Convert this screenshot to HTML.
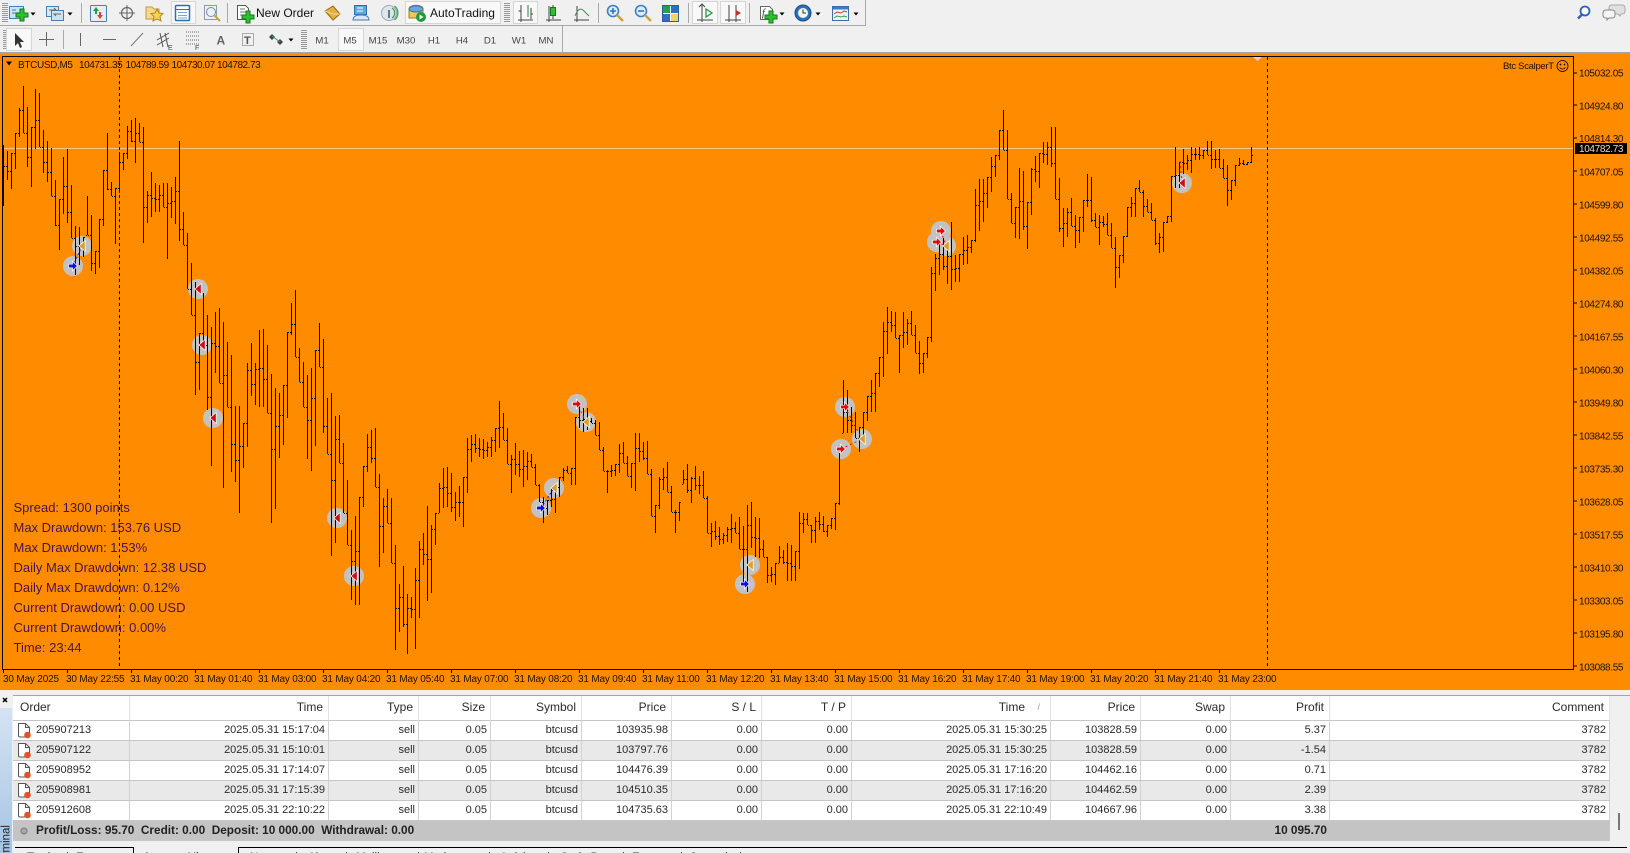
<!DOCTYPE html>
<html><head><meta charset="utf-8"><title>BTCUSD,M5</title>
<style>
html,body{margin:0;padding:0;width:1630px;height:853px;overflow:hidden;background:#f0f0f0;font-family:"Liberation Sans",sans-serif}
#s{position:absolute;left:0;top:0}
table{position:absolute;left:13px;top:696px;width:1597px;border-collapse:separate;border-spacing:0;table-layout:fixed;font-size:11px;color:#2a2a2a;background:#fff}
td,th{padding:0 3px 1px 0;text-align:right;white-space:nowrap;overflow:hidden;font-weight:normal;height:18px;line-height:18px;border-right:1px solid #d2d2d2;border-bottom:1px solid #c6c6c6;box-sizing:content-box}
th{height:23px;line-height:23px;padding-right:5px;font-size:12px;border-right:1px solid #e2e2e2;position:relative}
th:first-child{text-align:left;padding-left:7px}
th span{position:absolute;right:10px;top:0;color:#999;font-size:9px}
td:first-child{text-align:left;padding-left:23px;position:relative;overflow:visible}
td:first-child svg{position:absolute;left:4px;top:1px}
tr.a td{background:#e9e9e9}
tr.t td{background:#c4c4c4;border:0;height:18px;line-height:18px;padding-bottom:2px;font-weight:bold;font-size:11.8px;color:#222;overflow:visible}
</style></head><body>
<table>
<colgroup><col style="width:117px"><col style="width:199px"><col style="width:90px"><col style="width:72px"><col style="width:91px"><col style="width:90px"><col style="width:90px"><col style="width:90px"><col style="width:199px"><col style="width:90px"><col style="width:90px"><col style="width:99px"><col></colgroup>
<tr><th>Order</th><th>Time</th><th>Type</th><th>Size</th><th>Symbol</th><th>Price</th><th>S / L</th><th>T / P</th><th style="padding-right:25px">Time<span>/</span></th><th>Price</th><th>Swap</th><th>Profit</th><th>Comment</th></tr>
<tr><td><svg width="16" height="18"><use href="#doc"/></svg>205907213</td><td>2025.05.31 15:17:04</td><td>sell</td><td>0.05</td><td>btcusd</td><td>103935.98</td><td>0.00</td><td>0.00</td><td>2025.05.31 15:30:25</td><td>103828.59</td><td>0.00</td><td>5.37</td><td>3782</td></tr>
<tr class="a"><td><svg width="16" height="18"><use href="#doc"/></svg>205907122</td><td>2025.05.31 15:10:01</td><td>sell</td><td>0.05</td><td>btcusd</td><td>103797.76</td><td>0.00</td><td>0.00</td><td>2025.05.31 15:30:25</td><td>103828.59</td><td>0.00</td><td>-1.54</td><td>3782</td></tr>
<tr><td><svg width="16" height="18"><use href="#doc"/></svg>205908952</td><td>2025.05.31 17:14:07</td><td>sell</td><td>0.05</td><td>btcusd</td><td>104476.39</td><td>0.00</td><td>0.00</td><td>2025.05.31 17:16:20</td><td>104462.16</td><td>0.00</td><td>0.71</td><td>3782</td></tr>
<tr class="a"><td><svg width="16" height="18"><use href="#doc"/></svg>205908981</td><td>2025.05.31 17:15:39</td><td>sell</td><td>0.05</td><td>btcusd</td><td>104510.35</td><td>0.00</td><td>0.00</td><td>2025.05.31 17:16:20</td><td>104462.59</td><td>0.00</td><td>2.39</td><td>3782</td></tr>
<tr><td><svg width="16" height="18"><use href="#doc"/></svg>205912608</td><td>2025.05.31 22:10:22</td><td>sell</td><td>0.05</td><td>btcusd</td><td>104735.63</td><td>0.00</td><td>0.00</td><td>2025.05.31 22:10:49</td><td>104667.96</td><td>0.00</td><td>3.38</td><td>3782</td></tr>
<tr class="t"><td colspan="11" style="text-align:left;word-spacing:0"><svg width="12" height="18" style="left:5px;top:1px"><circle cx="6" cy="9" r="3" fill="#aaa" stroke="#777"/></svg>Profit/Loss: 95.70&nbsp; Credit: 0.00&nbsp; Deposit: 10 000.00&nbsp; Withdrawal: 0.00</td><td>10 095.70</td><td></td></tr>
</table>

<svg id="s" width="1630" height="853" viewBox="0 0 1630 853" xmlns="http://www.w3.org/2000/svg" style="pointer-events:none">
<defs>
<linearGradient id="lb" x1="0" y1="0" x2="0" y2="1"><stop offset="0" stop-color="#d4e3f2"/><stop offset="1" stop-color="#a6c4e4"/></linearGradient>
<g id="doc"><path d="M1.500 1.500h7l4 4v8c0 1-.5 1.500-1.500 1.500h-8c-1 0-1.500-.5-1.500-1.500z" fill="#fff" stroke="#555"/><path d="M8.500 1.500v4h4" fill="none" stroke="#555"/><circle cx="10.500" cy="13" r="3.300" fill="#e2522a"/></g>
<path id="plus" d="M-2-6h4v4h4v4h-4v4h-4v-4h-4v-4h4z" fill="#2ec02e" stroke="#0f7d1f" stroke-width="1"/>
<path id="ra" d="M-4.500-1.800h4v-3l5 4.800-5 4.800v-3h-4z" stroke="#fff" stroke-width=".7"/>
<path id="lt" d="M3.200-5.500L-3.200 0 3.200 5.500z" stroke="#fff" stroke-width=".7"/>
<path id="dd" d="M-2.500-1.500h5l-2.500 3z" fill="#000"/>
<g id="grip" fill="#999"><rect x="0" y="0" width="6" height="1"/><rect x="0" y="2" width="6" height="1"/><rect x="0" y="4" width="6" height="1"/><rect x="0" y="6" width="6" height="1"/><rect x="0" y="8" width="6" height="1"/><rect x="0" y="10" width="6" height="1"/><rect x="0" y="12" width="6" height="1"/><rect x="0" y="14" width="6" height="1"/><rect x="0" y="16" width="6" height="1"/><rect x="0" y="18" width="6" height="1"/></g>
<g id="mag"><circle r="5.500" fill="#d9ecfa" stroke="#3e7fc0" stroke-width="1.600"/><path d="M4 4l6 6" stroke="#c9a33a" stroke-width="2.500"/></g>
</defs>

<!-- chart background -->
<rect x="0" y="52" width="1630" height="2" fill="#a4a4a4"/>
<rect x="0" y="54" width="1630" height="636" fill="#ff8c00"/>
<rect x="2.500" y="56.500" width="1571" height="613" fill="none" stroke="#000"/>
<path d="M3 148.500H1573" stroke="#eec690" stroke-width="1"/>
<polygon points="1253,57 1262,57 1257.500,61" fill="#eed2ae"/>

<!-- position circles -->
<g fill="#c2c2c2">
<circle cx="82" cy="246" r="10"/><circle cx="73" cy="266" r="10"/><circle cx="198" cy="289" r="10"/><circle cx="202" cy="345" r="10"/><circle cx="213" cy="418" r="10"/><circle cx="337" cy="518" r="10"/><circle cx="354" cy="576" r="10"/><circle cx="541" cy="508" r="10"/><circle cx="554" cy="488" r="10"/><circle cx="577" cy="404" r="10"/><circle cx="586" cy="422" r="10"/><circle cx="750" cy="565" r="10"/><circle cx="745" cy="584" r="10"/><circle cx="845" cy="407" r="10"/><circle cx="841" cy="449" r="10"/><circle cx="862" cy="439" r="10"/><circle cx="941" cy="231" r="10"/><circle cx="937" cy="242" r="10"/><circle cx="946" cy="246" r="10"/><circle cx="1182" cy="183" r="10"/>
</g>

<path id="bars" fill="none" stroke="#000" stroke-width="1" shape-rendering="crispEdges"/>

<!-- dashed lines -->
<path d="M119.500 57V669M1267.500 57V669" stroke="#000" stroke-dasharray="3 3" fill="none" shape-rendering="crispEdges"/>

<!-- trade lines -->
<path d="M73 266L82 246M541 508L554 488" stroke="#2020d0" stroke-dasharray="2 2"/>
<path d="M845 407L862 439M841 449L862 439M937 242L946 246M941 231L946 246M1182 183L1180 160M586 422L577 404" stroke="#d02020" stroke-dasharray="2 3"/>

<!-- arrows -->
<use href="#ra" x="73" y="266" fill="#1010d8"/><use href="#ra" x="541" y="508" fill="#1010d8"/><use href="#ra" x="745" y="584" fill="#1010d8"/>
<use href="#ra" x="577" y="404" fill="#e00a14"/><use href="#ra" x="845" y="407" fill="#e00a14"/><use href="#ra" x="841" y="449" fill="#e00a14"/><use href="#ra" x="941" y="231" fill="#e00a14"/><use href="#ra" x="937" y="242" fill="#e00a14"/>
<use href="#lt" x="198" y="289" fill="#c8101c"/><use href="#lt" x="202" y="345" fill="#c8101c"/><use href="#lt" x="213" y="418" fill="#c8101c"/><use href="#lt" x="337" y="518" fill="#c8101c"/><use href="#lt" x="354" y="576" fill="#c8101c"/><use href="#lt" x="1182" y="183" fill="#c8101c"/>
<use href="#lt" x="82" y="246" fill="#d8a030"/><use href="#lt" x="554" y="488" fill="#d8a030"/><use href="#lt" x="586" y="422" fill="#d8a030"/><use href="#lt" x="750" y="565" fill="#d8a030"/><use href="#lt" x="862" y="439" fill="#d8a030"/><use href="#lt" x="946" y="246" fill="#d8a030"/>

<!-- chart header -->
<polygon points="6,61.500 12,61.500 9,65.500" fill="#000"/>
<g font-family="'Liberation Sans',sans-serif" font-size="10" fill="#1a1000" letter-spacing="-.35">
<text x="18" y="68">BTCUSD,M5</text>
<g letter-spacing="-.45"><text x="79" y="68">104731.35</text><text x="125.500" y="68">104789.59</text><text x="171.500" y="68">104730.07</text><text x="217" y="68">104782.73</text></g>
<text x="1503" y="69" font-size="9.500" letter-spacing="-.3">Btc ScalperT</text>
<!-- right axis -->
<text x="1579" y="76.500">105032.05</text><text x="1579" y="109.500">104924.80</text><text x="1579" y="142">104814.30</text><text x="1579" y="175.500">104707.05</text><text x="1579" y="208.500">104599.80</text><text x="1579" y="241.500">104492.55</text><text x="1579" y="274.500">104382.05</text><text x="1579" y="307.500">104274.80</text><text x="1579" y="340.500">104167.55</text><text x="1579" y="373.500">104060.30</text><text x="1579" y="406.500">103949.80</text><text x="1579" y="439.500">103842.55</text><text x="1579" y="472.500">103735.30</text><text x="1579" y="505.500">103628.05</text><text x="1579" y="538.500">103517.55</text><text x="1579" y="571.500">103410.30</text><text x="1579" y="604.500">103303.05</text><text x="1579" y="637.500">103195.80</text><text x="1579" y="670.500">103088.55</text>
<!-- bottom axis -->
<g letter-spacing="-.18">
<text x="3" y="682">30 May 2025</text><text x="66" y="682">30 May 22:55</text><text x="130" y="682">31 May 00:20</text><text x="194" y="682">31 May 01:40</text><text x="258" y="682">31 May 03:00</text><text x="322" y="682">31 May 04:20</text><text x="386" y="682">31 May 05:40</text><text x="450" y="682">31 May 07:00</text><text x="514" y="682">31 May 08:20</text><text x="578" y="682">31 May 09:40</text><text x="642" y="682">31 May 11:00</text><text x="706" y="682">31 May 12:20</text><text x="770" y="682">31 May 13:40</text><text x="834" y="682">31 May 15:00</text><text x="898" y="682">31 May 16:20</text><text x="962" y="682">31 May 17:40</text><text x="1026" y="682">31 May 19:00</text><text x="1090" y="682">31 May 20:20</text><text x="1154" y="682">31 May 21:40</text><text x="1218" y="682">31 May 23:00</text>
</g>
</g>
<g fill="none" stroke="#000" stroke-width=".8"><circle cx="1562.500" cy="66" r="5.500"/><circle cx="1560.500" cy="64.500" r=".5"/><circle cx="1564.500" cy="64.500" r=".5"/><path d="M1559.500 67.500q3 3 6 0"/></g>
<rect x="1575" y="143" width="52" height="11" fill="#000"/>
<text x="1579" y="152" font-family="'Liberation Sans',sans-serif" font-size="10" fill="#f4d9b8" letter-spacing="-.35">104782.73</text>
<path d="M1574 73h3M1574 105h3M1574 138h3M1574 171h3M1574 204h3M1574 237h3M1574 270h3M1574 303h3M1574 336h3M1574 369h3M1574 402h3M1574 435h3M1574 468h3M1574 501h3M1574 534h3M1574 567h3M1574 600h3M1574 633h3M1574 666h3M3.500 670v3M67.500 670v3M131.500 670v3M195.500 670v3M259.500 670v3M323.500 670v3M387.500 670v3M451.500 670v3M515.500 670v3M579.500 670v3M643.500 670v3M707.500 670v3M771.500 670v3M835.500 670v3M899.500 670v3M963.500 670v3M1027.500 670v3M1091.500 670v3M1155.500 670v3M1219.500 670v3" stroke="#000" fill="none" shape-rendering="crispEdges"/>

<!-- overlay text -->
<g font-family="'Liberation Sans',sans-serif" font-size="13" fill="#441256">
<text x="13.500" y="512">Spread: 1300 points</text><text x="13.500" y="532">Max Drawdown: 153.76 USD</text><text x="13.500" y="552">Max Drawdown: 1.53%</text><text x="13.500" y="572">Daily Max Drawdown: 12.38 USD</text><text x="13.500" y="592">Daily Max Drawdown: 0.12%</text><text x="13.500" y="612">Current Drawdown: 0.00 USD</text><text x="13.500" y="632">Current Drawdown: 0.00%</text><text x="13.500" y="652">Time: 23:44</text>
</g>

<!-- toolbars -->
<path d="M0 25.500H865.500V0" fill="none" stroke="#a8a8a8"/><path d="M562.500 26V52" stroke="#aaa"/>
<use href="#grip" x="2" y="3"/><use href="#grip" x="504" y="3"/><use href="#grip" x="3" y="30"/><use href="#grip" x="301" y="30"/>
<!-- pressed buttons -->
<g fill="#f8f8f8" stroke="#d6d6d6"><rect x="171.500" y="1.500" width="24" height="22"/><rect x="513.500" y="1.500" width="24" height="22"/><rect x="692.500" y="1.500" width="25" height="22"/><rect x="720.500" y="1.500" width="25" height="22"/><rect x="6.500" y="28.500" width="25" height="22"/><rect x="338.500" y="28.500" width="25" height="22"/><rect x="405.500" y="1.500" width="95" height="22"/></g>
<!-- separators -->
<path d="M81.500 3V23M227.500 3V23M598.500 3V23M688.500 3V23M749.500 3V23M63.500 30V49" stroke="#aaa"/>
<!-- new chart -->
<rect x="9.500" y="6.500" width="14" height="12" fill="#cfe1f2" stroke="#4d7ea8"/><path d="M12 10h4M12 13h6" stroke="#4d7ea8"/><use href="#plus" x="22" y="15"/><use href="#dd" x="33" y="14"/>
<rect x="46.500" y="6.500" width="12" height="10" fill="#dbe8f4" stroke="#4d7ea8"/><rect x="51.500" y="10.500" width="12" height="10" fill="#cfe1f2" stroke="#4d7ea8"/><path d="M49 10h7l-2-2M61 14h-7l2 2" fill="none" stroke="#666"/><use href="#dd" x="70" y="14"/>
<!-- market watch -->
<rect x="90.500" y="5.500" width="16" height="16" rx="1" fill="#e4eef8" stroke="#4d7ea8"/><path d="M96 7l3 4h-2v3h-2v-3h-2z" fill="#20a040"/><path d="M100 19l-3-4h2v-3h2v3h2z" fill="#d84820"/>
<!-- navigator -->
<circle cx="127" cy="13" r="5.500" fill="none" stroke="#666" stroke-width="1.200"/><path d="M127 5v16M119 13h16" stroke="#666"/>
<!-- folder star -->
<path d="M146 7h6l2 2h5v10h-13z" fill="#f4d98a" stroke="#c09a40"/><path d="M157 9l2 4 4 .5-3 3 1 4.500-4-2-4 2 1-4.500-3-3 4-.5z" fill="#f6d050" stroke="#b08a20"/>
<!-- terminal -->
<rect x="175.500" y="5.500" width="14" height="15" rx="1" fill="#fff" stroke="#2d6fb0" stroke-width="1.500"/><path d="M175 9.500h15" stroke="#2d6fb0"/><path d="M178 12.500h9M178 15.500h9M178 18h9" stroke="#7aa8d0"/>
<!-- tester -->
<rect x="204.500" y="5.500" width="12" height="14" fill="#eef2f6" stroke="#8a9ab0"/><circle cx="211" cy="12" r="4.500" fill="#e8f0f8" stroke="#7a8aa0"/><path d="M214 15l6 6" stroke="#c9a33a" stroke-width="2"/>
<!-- new order -->
<path d="M237.500 5.500h8l3 3v11h-11z" fill="#fff" stroke="#555"/><path d="M240 9h5M240 12h6M240 15h4" stroke="#777"/><use href="#plus" x="248" y="17"/>
<text x="256" y="17" font-family="'Liberation Sans',sans-serif" font-size="12" fill="#111">New Order</text>
<!-- gold book -->
<path d="M325 11l8-5 7 8-7 6z" fill="#e2b040" stroke="#9a6a10"/><path d="M325 11l8 3 7 0" fill="none" stroke="#f6dc90"/>
<!-- person -->
<rect x="354.500" y="5.500" width="12" height="9" fill="#60a8e0" stroke="#2d6fb0"/><path d="M353 20c0-4 4-5 8-5s8 1 8 5z" fill="#d8e8f6" stroke="#4d7ea8"/><path d="M357 8h6M357 11h6" stroke="#fff"/>
<!-- signal -->
<circle cx="389" cy="13" r="7.500" fill="#dfe6ea" stroke="#9aa8b0"/><path d="M392 8a6 6 0 0 1 0 10M394.500 6a9 9 0 0 1 0 14" fill="none" stroke="#3ea060" stroke-width="1.300"/><path d="M389 10v8" stroke="#5a7a9a" stroke-width="2"/>
<!-- autotrading -->
<path d="M409 9c0-5 14-5 14 0v9h-14z" fill="#f2c850" stroke="#a08020"/><ellipse cx="416" cy="9" rx="7" ry="3" fill="#6aa8d8" stroke="#3a78a8"/><circle cx="421" cy="17" r="5" fill="#1f9a3a"/><path d="M419.500 14.500l4 2.500-4 2.500z" fill="#fff"/>
<text x="430" y="17" font-family="'Liberation Sans',sans-serif" font-size="12" fill="#111">AutoTrading</text>
<!-- chart types -->
<g fill="none" stroke="#444"><path d="M518 20h15M521 5v17M531 8v11" /><path d="M518.500 11h2.500M531 14h2" /><path d="M528 5v12" stroke="#1e8a3e"/></g>
<g fill="none" stroke="#444"><path d="M546 20h15M549 6v16"/><path d="M553 5v14"/></g><rect x="550.500" y="7.500" width="5" height="8" fill="#2ec02e" stroke="#0f7d1f"/>
<g fill="none" stroke="#444"><path d="M574 20h15M577 6v16"/><path d="M575 16c3-8 6-8 9-5l5 5" stroke="#3f8f5f"/></g>
<!-- zoom -->
<use href="#mag" x="613" y="11"/><path d="M610 11h6M613 8v6" stroke="#2d6fb0" stroke-width="1.500"/>
<use href="#mag" x="641" y="11"/><path d="M638 11h6" stroke="#2d6fb0" stroke-width="1.500"/>
<!-- tile -->
<rect x="662.500" y="5.500" width="16" height="16" fill="#fff" stroke="#2d5fa0"/><rect x="663" y="6" width="7" height="7" fill="#28a048"/><rect x="671" y="6" width="7" height="7" fill="#2d6fc0"/><rect x="663" y="14" width="7" height="7" fill="#2d6fc0"/><rect x="671" y="14" width="7" height="7" fill="#e8d860"/>
<!-- shift / autoscroll -->
<g fill="none" stroke="#444"><path d="M697 20h16M702 5v17"/><path d="M699 7l3-3 3 3"/></g><path d="M706 9l6 4-6 4z" fill="none" stroke="#20a040" stroke-width="1.300"/>
<g fill="none" stroke="#444"><path d="M725 20h16M729 5v17M736 5v17"/></g><path d="M741 13l-5-3v6z" fill="#c03020"/>
<!-- indicators -->
<path d="M760.500 6.500h9l3 3v10h-12z" fill="#fff" stroke="#666"/><text x="762" y="16" font-family="'Liberation Serif',serif" font-size="10" font-style="italic" fill="#333">f</text><use href="#plus" x="771" y="17"/><use href="#dd" x="782" y="14"/>
<!-- clock -->
<circle cx="803" cy="13" r="8" fill="#2a72b8" stroke="#1a4a80"/><circle cx="803" cy="13" r="5" fill="#f4f4ee"/><path d="M803 9.500v3.500h3" fill="none" stroke="#333"/><use href="#dd" x="818" y="14"/>
<!-- templates -->
<rect x="832.500" y="6.500" width="16" height="14" fill="#eaf2fa" stroke="#3a6ea8"/><rect x="833" y="7" width="15" height="2.500" fill="#3a7ec0"/><path d="M834 14l3-2 4 1 3-2 3 1" fill="none" stroke="#c04030"/><path d="M834 18l3-2 4 1 3-1 3 1" fill="none" stroke="#30a050"/><use href="#dd" x="856" y="14"/>

<!-- row 2 -->
<path d="M15 33l0 13 3-3 2 5 2-1-2-5h4z" fill="#333"/>
<path d="M46.500 32v14M39 39.500h15" stroke="#666"/><path d="M80.500 33v13" stroke="#666"/><path d="M103 39.500h13" stroke="#666"/><path d="M131 46l12-13" stroke="#777"/>
<g stroke="#555" fill="none"><path d="M157 40l12-7M157 45l12-7M160 33l3 14M165 33l3 14"/></g><text x="168" y="50" font-family="'Liberation Sans',sans-serif" font-size="7" fill="#444">E</text>
<g stroke="#666" stroke-dasharray="1 1"><path d="M186 32h14M186 36h14M186 40h14M186 44h14"/></g><text x="195" y="50" font-family="'Liberation Sans',sans-serif" font-size="7" fill="#444">F</text>
<text x="216.500" y="44.500" font-family="'Liberation Sans',sans-serif" font-size="12" font-weight="bold" fill="#666">A</text>
<rect x="242.500" y="33.500" width="11" height="12" fill="none" stroke="#666" stroke-dasharray="1 1"/><text x="244" y="44" font-family="'Liberation Sans',sans-serif" font-size="11" font-weight="bold" fill="#555">T</text>
<path d="M272 34l3 3-3 3-3-3zM280 39l3 3-3 3-3-3z" fill="#444"/><path d="M272 36l8 6" stroke="#3a9a5a"/><use href="#dd" x="291" y="40"/>
<g font-family="'Liberation Sans',sans-serif" font-size="9.600" fill="#444" text-anchor="middle">
<text x="322" y="43.500">M1</text><text x="350" y="43.500">M5</text><text x="378" y="43.500">M15</text><text x="406" y="43.500">M30</text><text x="434" y="43.500">H1</text><text x="462" y="43.500">H4</text><text x="490" y="43.500">D1</text><text x="519" y="43.500">W1</text><text x="546" y="43.500">MN</text>
</g>
<!-- top right -->
<circle cx="1585" cy="11" r="4.500" fill="#fff" stroke="#2d5fc0" stroke-width="1.800"/><path d="M1582 14.500l-4 4" stroke="#2d5fc0" stroke-width="2.500"/>
<path d="M1612 5h10c2 0 3 1 3 3v3c0 2-1 3-3 3h-1l-1 2-2-2h-6c-2 0-3-1-3-3V8c0-2 1-3 3-3z" fill="#e0e0e0" stroke="#aaa"/>
<path d="M1606 10h6c2 0 3 1 3 3v2c0 2-1 3-3 3h-3l-2 2v-2h-1c-2 0-3-1-3-3v-2c0-2 1-3 3-3z" fill="#f4f4f4" stroke="#888"/>

<!-- terminal chrome -->
<path d="M13 695.500H1630" stroke="#a4a4a4"/>
<rect x="0" y="708" width="12" height="145" fill="url(#lb)"/>
<path d="M3 698l4 4M7 698l-4 4" stroke="#000" stroke-width="1.500"/>
<text x="9.500" y="825" transform="rotate(-90 9.500 825)" text-anchor="end" font-family="'Liberation Sans',sans-serif" font-size="11.500" fill="#222">Terminal</text>
<rect x="1618" y="813" width="2" height="17" fill="#777"/>
<!-- tabs -->
<path d="M15 847.500H133.500V853M238.500 853V847.500H1627" fill="none" stroke="#000"/>
<g font-family="'Liberation Sans',sans-serif" font-size="11.500" fill="#333">
<text x="27" y="861">Trade</text><text x="66" y="861">|</text><text x="76" y="861">Exposure</text><text x="143" y="861" fill="#000">Account History</text><text x="250" y="861">News</text><text x="295" y="861">|</text><text x="308" y="861">Alerts</text><text x="345" y="861">|</text><text x="356" y="861">Mailbox</text><text x="417" y="861">|</text><text x="424" y="861">Market</text><text x="488" y="861">|</text><text x="500" y="861">Articles</text><text x="547" y="861">|</text><text x="560" y="861">Code Base</text><text x="622" y="861">|</text><text x="632" y="861">Experts</text><text x="680" y="861">|</text><text x="690" y="861">Journal</text><text x="739" y="861">|</text>
</g>
</svg>

<script>
var d="145,206 151,180 153,189 133,169 108,137 86,133 107,167 127,187 89,149 93,147 130,173 141,182 148,196 180,226 199,250 157,214 149,223 185,238 226,275 227,265 237,257 196,235 215,271 251,274 219,268 170,226 133,190 182,196 188,244 152,193 153,170 126,159 120,142 118,163 123,142 127,243 191,223 172,217 183,212 185,212 183,207 183,259 187,218 177,224 141,241 212,245 233,289 263,315 282,395 333,390 293,345 315,410 327,466 312,373 308,383 322,488 342,407 355,472 406,482 406,513 423,468 363,447 343,396 363,405 330,407 329,407 345,413 374,523 388,509 393,458 385,445 332,418 303,335 290,357 348,382 362,407 375,459 368,471 350,446 323,367 339,433 398,454 393,556 416,543 415,463 443,513 480,545 530,600 516,605 497,605 466,507 434,472 430,463 428,487 474,567 498,553 489,523 498,563 545,650 584,632 566,627 594,654 597,618 568,649 541,618 533,565 506,601 525,593 513,545 483,513 468,508 467,507 473,512 492,521 486,517 477,527 438,493 435,462 434,453 438,457 439,459 442,457 437,457 428,452 401,448 413,440 428,464 455,493 443,475 451,477 450,487 452,480 454,467 464,485 484,502 497,523 500,515 488,507 485,513 477,497 468,481 466,473 468,485 417,485 403,428 408,432 408,430 418,423 420,435 422,450 447,471 470,493 465,477 464,476 444,473 442,463 456,476 463,488 433,491 433,462 442,460 441,474 469,516 505,533 477,509 468,490 462,492 486,512 510,533 502,521 470,484 464,493 477,503 466,490 476,494 471,498 496,533 523,547 521,540 527,545 533,544 527,542 514,543 522,533 517,549 526,583 505,592 502,548 517,557 518,558 540,557 557,583 567,582 563,585 546,563 550,564 543,581 545,581 551,581 512,569 513,533 513,525 525,543 517,543 512,530 516,532 525,537 518,529 503,530 453,505 380,433 390,433 407,433 412,438 427,452 412,440 396,421 380,412 373,412 357,387 322,377 307,354 311,332 312,338 335,373 312,348 319,345 311,335 325,353 341,374 353,373 337,358 267,342 254,291 240,275 238,270 248,284 222,290 255,282 254,282 237,265 235,264 240,253 189,242 179,231 179,222 177,208 157,192 155,177 130,160 110,150 130,199 193,223 207,238 168,239 171,230 202,249 168,215 156,182 153,188 142,163 142,165 127,167 127,199 178,232 208,247 208,237 198,226 215,248 217,243 200,232 174,207 177,222 213,227 215,245 216,227 213,235 223,248 237,288 255,278 236,263 207,237 197,217 188,217 180,192 190,217 199,212 203,220 218,245 233,253 222,252 216,223 176,222 147,188 162,188 149,174 155,170 147,173 148,160 147,160 150,159 141,155 141,169 150,168 149,168 159,178 165,206 180,200 165,186 158,166 160,165 162,165 147,163".split(" ").map(function(s){return s.split(",").map(Number)});
var p="",c=d[0][0]+10;
d.forEach(function(b,i){
 var x=3.5+4*i,n=d[i+1]||b,o=Math.max(b[0],Math.min(b[1],c)),t=Math.round((n[0]+n[1])/2);
 c=Math.max(b[0],Math.min(b[1],t));
 p+="M"+x+" "+b[0]+"V"+b[1]+"M"+(x-.5)+" "+(o+.5)+"h-1M"+(x+.5)+" "+(c+.5)+"h1";
});
document.getElementById("bars").setAttribute("d",p);
</script>
</body></html>
